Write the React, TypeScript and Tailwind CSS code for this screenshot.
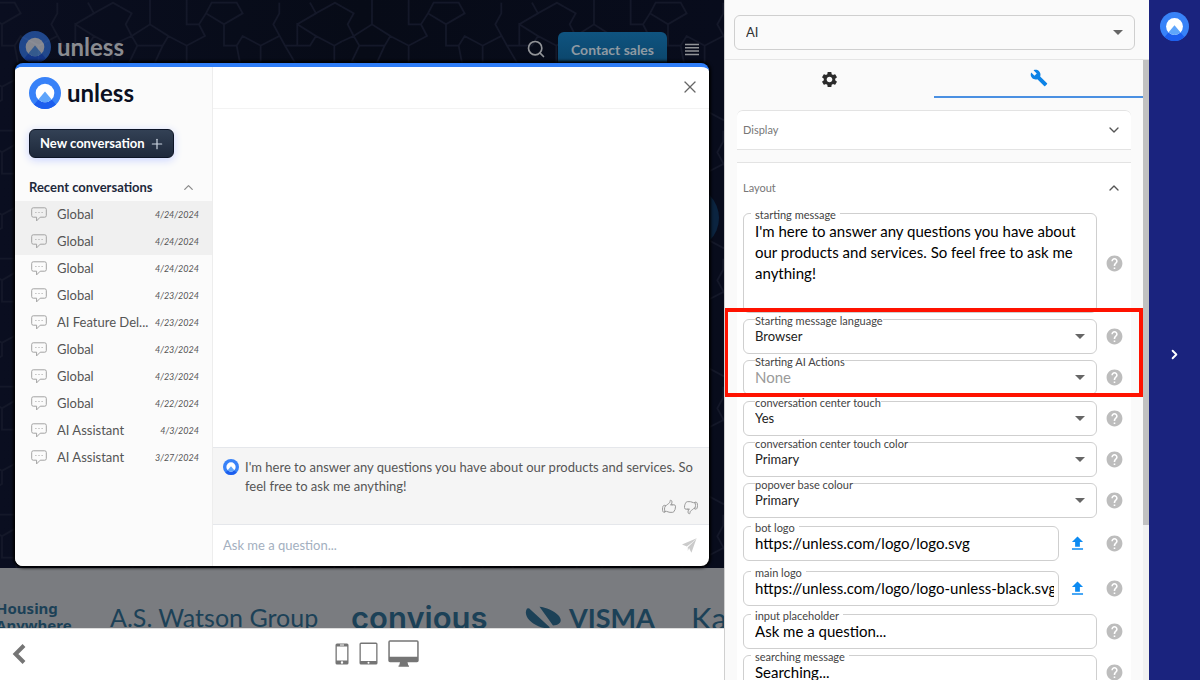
import { useId } from "react";
import { ChevronDown, ChevronRight, ChevronUp, Plus, Search, X } from "lucide-react";
import { HiOutlineHandThumbDown, HiOutlineHandThumbUp } from "react-icons/hi2";
import { MdBuild, MdHelp, MdSettings, MdUpload } from "react-icons/md";

type Conversation = {
  title: string;
  date: string;
  active?: boolean;
};

const conversations: Conversation[] = [
  { title: "Global", date: "4/24/2024", active: true },
  { title: "Global", date: "4/24/2024", active: true },
  { title: "Global", date: "4/24/2024" },
  { title: "Global", date: "4/23/2024" },
  { title: "AI Feature Del...", date: "4/23/2024" },
  { title: "Global", date: "4/23/2024" },
  { title: "Global", date: "4/23/2024" },
  { title: "Global", date: "4/22/2024" },
  { title: "AI Assistant", date: "4/3/2024" },
  { title: "AI Assistant", date: "3/27/2024" },
];

const greeting =
  "I'm here to answer any questions you have about our products and services. So feel free to ask me anything!";

function Logo({ className }: { className: string }) {
  const id = useId();
  return (
    <svg viewBox="0 0 32 32" className={className} aria-hidden="true">
      <clipPath id={`${id}-outer`}>
        <circle cx="16" cy="16" r="16" />
      </clipPath>
      <clipPath id={`${id}-inner`}>
        <circle cx="16" cy="16" r="9.3" />
      </clipPath>
      <circle cx="16" cy="16" r="16" fill="#3882f8" />
      <path d="M16 14.5 34 36H-2z" fill="#1c5eee" clipPath={`url(#${id}-outer)`} />
      <circle cx="16" cy="16" r="9.3" fill="#fff" />
      <path d="M16 14.5 34 36H-2z" fill="#5fa5fb" clipPath={`url(#${id}-inner)`} />
    </svg>
  );
}

function ChatIcon() {
  return (
    <svg viewBox="0 0 16 15" className="h-[15px] w-4 shrink-0" fill="none" stroke="#a3a3a3" aria-hidden="true">
      <path d="M2.3.8h11.4a1.6 1.6 0 0 1 1.6 1.6v6.2a1.6 1.6 0 0 1-1.6 1.6H9.2L5.6 13.9v-3.7H2.3A1.6 1.6 0 0 1 .7 8.6V2.4A1.6 1.6 0 0 1 2.3.8z" />
      <path d="M4.4 5.5h1M7.5 5.5h1M10.6 5.5h1" />
    </svg>
  );
}

function HeroPattern() {
  const id = useId();
  return (
    <svg className="absolute inset-0 h-full w-full" aria-hidden="true">
      <defs>
        <pattern id={id} width="222" height="128" patternUnits="userSpaceOnUse" patternTransform="translate(120 0)">
          <g transform="scale(.3333)" fill="none" stroke="#141829" strokeWidth="5">
            <path d="M90 0V73L35 108 52 137H128L145 108 200 137 255 108 237 73H200V0M145 108 90 73M52 137 30 183 90 220 128 137M200 137V200L145 230M237 73 258 40 312 73V137H350L368 108 422 137 478 108M312 73 368 40 350 8H275L258 40M422 137V200L368 230 350 137M478 8V40L460 73 495 137H570L588 108 532 73V137M532 73 588 40 570 8M588 108 643 137 666 124M588 40 645 8 666 20M0 124 35 108M0 20 35 40 17 73 35 108M643 137V200L588 230 532 200 495 137M90 220V300L145 330 200 300 255 330 312 300V260L255 230 200 200M312 260 368 230 422 260V330L478 360 532 330V260L588 230M532 330 588 360 644 330 666 345M90 300 35 330 0 345M145 330V384M255 330V384M422 330 368 384M644 330V260L666 240M0 240 30 183" />
          </g>
        </pattern>
      </defs>
      <rect width="100%" height="100%" fill={`url(#${id})`} />
    </svg>
  );
}

function Caret() {
  return (
    <svg viewBox="0 0 10 5" className="pointer-events-none absolute right-[11px] h-[5px] w-2.5" aria-hidden="true">
      <path d="M0 0h10L5 5z" fill="#666" />
    </svg>
  );
}

function Help() {
  return (
    <button type="button" aria-label="Help" className="ml-auto text-[#bdbdbd]">
      <MdHelp size={19} />
    </button>
  );
}

function SelectField({ label, value, muted }: { label: string; value: string; muted?: boolean }) {
  const id = useId();
  return (
    <div className="flex items-center">
      <div className="relative flex h-[35px] w-[354px] items-center rounded-md border border-[#cfcfcf]">
        <label htmlFor={id} className="absolute -top-1.5 left-[11px] bg-white text-[11px] leading-[14px] text-[#444]">
          {label}
        </label>
        <select
          id={id}
          className={
            muted
              ? "h-full w-full appearance-none bg-transparent px-[11px] text-[15px] text-[#9a9a9a]"
              : "h-full w-full appearance-none bg-transparent px-[11px] text-[13px] text-[#222]"
          }
        >
          <option>{value}</option>
        </select>
        <Caret />
      </div>
      <Help />
    </div>
  );
}

function TextField({ label, value, upload }: { label: string; value: string; upload?: boolean }) {
  const id = useId();
  return (
    <div className={upload ? "flex items-center py-0.5" : "flex items-center"}>
      <div
        className={
          upload
            ? "relative h-[35px] w-[316px] rounded-md border border-[#cfcfcf]"
            : "relative h-[35px] w-[354px] rounded-md border border-[#cfcfcf]"
        }
      >
        <label htmlFor={id} className="absolute -top-1.5 left-[7px] bg-white px-1 text-[11px] leading-[14px] text-[#444]">
          {label}
        </label>
        <div className="h-full pr-1 pb-0.5 pl-[11px]">
          <input id={id} defaultValue={value} className="h-full w-full bg-transparent text-[15px] text-black outline-none" />
        </div>
      </div>
      {upload && (
        <button type="button" aria-label={`Upload ${label}`} className="ml-[9px] text-[#0d8bf2]">
          <MdUpload size={19} />
        </button>
      )}
      <Help />
    </div>
  );
}

function ChatDialog() {
  return (
    <div
      role="dialog"
      aria-label="Assistant"
      className="absolute inset-x-[15px] top-[63px] bottom-[114px] flex overflow-hidden rounded-lg border-t-4 border-[#2f7df6] bg-white shadow-[0_0_3px_2px_#000]"
    >
      <aside className="w-[198px] shrink-0 border-r border-[#ededed] bg-[#fbfbfb]">
        <div className="flex items-center gap-1.5 px-3.5 pt-2.5">
          <Logo className="h-8 w-8" />
          <span className="text-2xl leading-8 font-bold text-[#0b1022]">unless</span>
        </div>
        <button
          type="button"
          className="mt-5 ml-3.5 flex h-[29px] items-center gap-1 rounded-md border border-[#0d1526] bg-linear-to-b from-[#334155] to-[#1e293b] pr-2 pl-2.5 text-[13px] font-bold whitespace-nowrap text-white shadow-[0_2px_8px_#c7d2fe]"
        >
          New conversation
          <Plus size={16} strokeWidth={1.8} className="text-[#cbd5e1]" />
        </button>
        <div className="mt-4 flex h-[27px] items-center justify-between pr-4 pl-3.5">
          <h2 className="text-[13px] font-bold text-[#1e293b]">Recent conversations</h2>
          <button type="button" aria-label="Collapse recent conversations" className="text-[#8a8a8a]">
            <ChevronUp size={15} />
          </button>
        </div>
        <ul>
          {conversations.map((c, i) => (
            <li key={i} className={c.active ? "bg-[#f0f0f0]" : ""}>
              <a href="#" className="flex h-[27px] items-center pr-[13px] pl-4 whitespace-nowrap">
                <ChatIcon />
                <span className="ml-2.5 text-[13px] text-[#555]">{c.title}</span>
                <time className="ml-auto text-[9px] text-[#555] italic">{c.date}</time>
              </a>
            </li>
          ))}
        </ul>
      </aside>

      <section className="flex min-w-0 flex-1 flex-col">
        <header className="flex h-[42px] items-center justify-end border-b border-[#f3f3f3] pr-[9px] pb-0.5">
          <button type="button" aria-label="Close" className="text-[#666]">
            <X size={20} strokeWidth={1.5} />
          </button>
        </header>
        <div className="flex-1" />
        <div className="border-y border-[#e5e7eb] bg-[#f5f5f5] px-2.5 pt-2.5 pb-[9px]">
          <div className="flex items-start gap-1.5">
            <Logo className="mt-px h-4 w-4 shrink-0" />
            <p className="text-[13px] leading-[19px] text-[#555]">{greeting}</p>
          </div>
          <div className="mt-[3px] flex justify-end gap-1.5 text-[#999]">
            <button type="button" aria-label="Good answer">
              <HiOutlineHandThumbUp size={16} />
            </button>
            <button type="button" aria-label="Bad answer">
              <HiOutlineHandThumbDown size={16} />
            </button>
          </div>
        </div>
        <form className="flex h-[41px] items-center justify-between pr-3 pl-2.5">
          <input
            aria-label="Ask me a question"
            placeholder="Ask me a question..."
            className="flex-1 text-[13px] outline-none placeholder:text-[#a3afc0]"
          />
          <button type="button" aria-label="Send">
            <svg viewBox="0 0 15 15" className="h-[15px] w-[15px]" fill="#cbcbcb" aria-hidden="true">
              <path d="M14.6.2 0 6.4l4.8 2.2L11 3.7z" />
              <path d="M14.6.2 9.4 14.8 7 10 5.8 13V9.2L12 3.2z" />
            </svg>
          </button>
        </form>
      </section>
    </div>
  );
}

function Preview() {
  return (
    <main className="relative flex min-w-0 flex-1 flex-col">
      <div className="relative flex-1 overflow-hidden bg-linear-to-r from-[#0a0e20] via-[#070b17] to-[#080c1c]">
        <HeroPattern />
        <div className="absolute top-[186px] right-[5px] h-16 w-16 rounded-full bg-[#0b2440]" />
        <nav className="relative flex items-start pt-[31px] pr-[25px] pl-[19px]">
          <div className="flex items-center gap-1.5">
            <Logo className="h-8 w-8 opacity-50" />
            <span className="text-2xl leading-8 font-bold text-[#8a8b90]">unless</span>
          </div>
          <button type="button" aria-label="Search" className="mt-2 ml-auto text-[#929498]">
            <Search size={20} />
          </button>
          <a href="#" className="mt-px ml-3 rounded-md bg-linear-to-b from-[#0f5480] to-[#0b4368] px-[13px] py-1.5 text-sm leading-6 font-bold text-[#8f9aa3]">
            Contact sales
          </a>
          <button type="button" aria-label="Menu" className="mt-3 ml-[18px]">
            <svg viewBox="0 0 14 13" className="h-[13px] w-3.5" stroke="#929498" strokeWidth="1.5" aria-hidden="true">
              <path d="M0 1.5h14M0 4.8h14M0 8.1h14M0 11.4h14" />
            </svg>
          </button>
        </nav>
      </div>

      <div className="flex h-[60px] overflow-hidden bg-[#7a7c80] pt-7 whitespace-nowrap text-[#1c4157]">
        <span className="-ml-1 w-[114px] shrink-0 pt-1 font-['Noto_Sans'] text-[15px] leading-[17px] font-bold">
          Housing
          <br />
          Anywhere
        </span>
        <span className="w-[241px] shrink-0 text-[25px] leading-[42px]">A.S. Watson Group</span>
        <span className="w-[174px] shrink-0 font-['Inter'] text-[31px] leading-[44px] font-semibold">convious</span>
        <svg viewBox="0 0 36 24" className="mt-2.5 mr-2 h-6 w-9 shrink-0" fill="currentColor" aria-hidden="true">
          <path d="M2 2.500C-1.500 8 3 16 14 20.500c5 2 9 2 11 1L4 2.200zM14.500.8 28 19.500c8-.5 10-5.500 5-10.500C29 5 21 1.200 14.500.8z" />
        </svg>
        <span className="w-[122px] shrink-0 text-[27px] leading-[44px] font-bold">VISMA</span>
        <span className="text-[31px] leading-[44px]">Ka</span>
      </div>

      <div className="relative flex h-[52px] items-center justify-center border-t border-[#ddd] bg-white pb-0.5 text-[#757575]">
        <button type="button" aria-label="Back" className="absolute left-3">
          <svg viewBox="0 0 14 20" className="h-5 w-3.5" fill="none" stroke="currentColor" strokeWidth="4" aria-hidden="true">
            <path d="M12 1.500 3.500 10l8.500 8.500" />
          </svg>
        </button>
        <div className="ml-[29px] flex items-center gap-2.5">
          <button type="button" aria-label="Phone">
            <svg viewBox="0 0 14 22" className="h-[22px] w-3.5" fill="currentColor" fillRule="evenodd" aria-hidden="true">
              <path d="M2 .5h10a1.500 1.500 0 0 1 1.500 1.500v18a1.500 1.500 0 0 1-1.500 1.500H2A1.500 1.500 0 0 1 .5 20V2A1.500 1.500 0 0 1 2 .5zM1.800 3.500v14h10.400v-14zM5 1.500v1h4v-1zM7 18.300a1.200 1.200 0 1 0 0 2.400 1.200 1.200 0 0 0 0-2.400z" />
            </svg>
          </button>
          <button type="button" aria-label="Tablet">
            <svg viewBox="0 0 19 23" className="h-[23px] w-[19px]" fill="currentColor" fillRule="evenodd" aria-hidden="true">
              <path d="M2 .5h15A1.500 1.500 0 0 1 18.500 2v19a1.500 1.500 0 0 1-1.500 1.500H2A1.500 1.500 0 0 1 .5 21V2A1.500 1.500 0 0 1 2 .5zM1.800 2v17h15.400V2zM9.500 19.800a1 1 0 1 0 0 2 1 1 0 0 0 0-2z" />
            </svg>
          </button>
          <button type="button" aria-label="Desktop">
            <svg viewBox="0 0 31 27" className="h-[27px] w-[31px]" fill="currentColor" fillRule="evenodd" aria-hidden="true">
              <path d="M2 .3h27A1.700 1.700 0 0 1 30.700 2v18.500a1.700 1.700 0 0 1-1.700 1.700h-9.500l.8 3.300h.7v1.300H10.500v-1.300h.7l.8-3.300H2a1.700 1.700 0 0 1-1.700-1.700V2A1.700 1.700 0 0 1 2 .3zM1.800 1.800v15h27.400v-15z" />
            </svg>
          </button>
        </div>
      </div>

      <ChatDialog />
    </main>
  );
}

function Settings() {
  const messageId = useId();
  return (
    <section className="flex w-[425px] shrink-0 flex-col overflow-hidden border-l border-[#d0d0d0] bg-[#fafafa]">
      <div className="border-b border-[#e5e5e5] pt-[15px] pr-3.5 pb-[9px] pl-[9px]">
        <div className="relative flex h-[35px] items-center rounded-md border border-[#cfcfcf]">
          <select aria-label="Component type" className="h-full w-full appearance-none bg-transparent px-[11px] text-[13px] text-[#333]">
            <option>AI</option>
          </select>
          <Caret />
        </div>
      </div>

      <div className="flex min-h-0 flex-1">
        <div className="min-w-0 flex-1">
          <div role="tablist" className="flex h-[38px]">
            <button type="button" role="tab" aria-label="Settings" aria-selected="false" className="flex flex-1 items-center justify-center text-[#2b2b2b]">
              <MdSettings size={19} />
            </button>
            <button type="button" role="tab" aria-label="Tools" aria-selected="true" className="flex flex-1 items-center justify-center border-b-2 border-[#4a90e2] text-[#0d83e6]">
              <MdBuild size={18} />
            </button>
          </div>

          <div className="px-3 pt-3">
            <button type="button" className="flex h-10 w-full items-center justify-between rounded-t-md border-y border-[#e3e3e3] bg-white pr-[9px] pl-1.5 text-[11px] text-[#777]">
              Display
              <ChevronDown size={16} className="text-[#555]" />
            </button>

            <div className="mt-3 border-t border-[#e3e3e3] bg-white pr-[7px] pb-5 pl-1.5">
              <button type="button" className="flex h-[50px] w-full items-center justify-between pr-0.5 text-[11px] text-[#777]">
                Layout
                <ChevronUp size={16} className="text-[#555]" />
              </button>

              <div className="flex flex-col gap-1.5">
                <div className="flex items-center">
                  <div className="relative h-[100px] w-[354px] rounded-md border border-[#cfcfcf]">
                    <label htmlFor={messageId} className="absolute -top-1.5 left-[7px] bg-white px-1 text-[11px] leading-[14px] text-[#444]">
                      starting message
                    </label>
                    <textarea
                      id={messageId}
                      defaultValue={greeting}
                      className="block h-full w-full resize-none bg-transparent px-[11px] pt-[7px] text-[15px] leading-[21px] text-black outline-none"
                    />
                  </div>
                  <Help />
                </div>

                <div className="relative flex flex-col gap-1.5">
                  <SelectField label="Starting message language" value="Browser" />
                  <SelectField label="Starting AI Actions" value="None" muted />
                  <div className="pointer-events-none absolute -top-[11px] -right-[19px] -bottom-0.5 -left-[19px] z-10 border-4 border-[#ff1200]" />
                </div>

                <SelectField label="conversation center touch" value="Yes" />
                <SelectField label="conversation center touch color" value="Primary" />
                <SelectField label="popover base colour" value="Primary" />
                <TextField label="bot logo" value="https://unless.com/logo/logo.svg" upload />
                <TextField label="main logo" value="https://unless.com/logo/logo-unless-black.svg" upload />
                <TextField label="input placeholder" value="Ask me a question..." />
                <TextField label="searching message" value="Searching..." />
              </div>
            </div>
          </div>
        </div>
        <div className="w-1.5 shrink-0 bg-[#f1f1f1]">
          <div className="h-3/4 bg-[#c1c1c1]" />
        </div>
      </div>
    </section>
  );
}

export default function App() {
  return (
    <div className="flex h-screen overflow-hidden bg-white font-['Lato','Liberation_Sans',sans-serif] antialiased">
      <Preview />
      <Settings />
      <aside className="flex w-[51px] shrink-0 flex-col items-center bg-[#1a237e] py-3 text-white">
        <Logo className="h-[29px] w-[29px]" />
        <button type="button" aria-label="Expand" className="my-auto">
          <ChevronRight size={15} strokeWidth={3} />
        </button>
      </aside>
    </div>
  );
}
